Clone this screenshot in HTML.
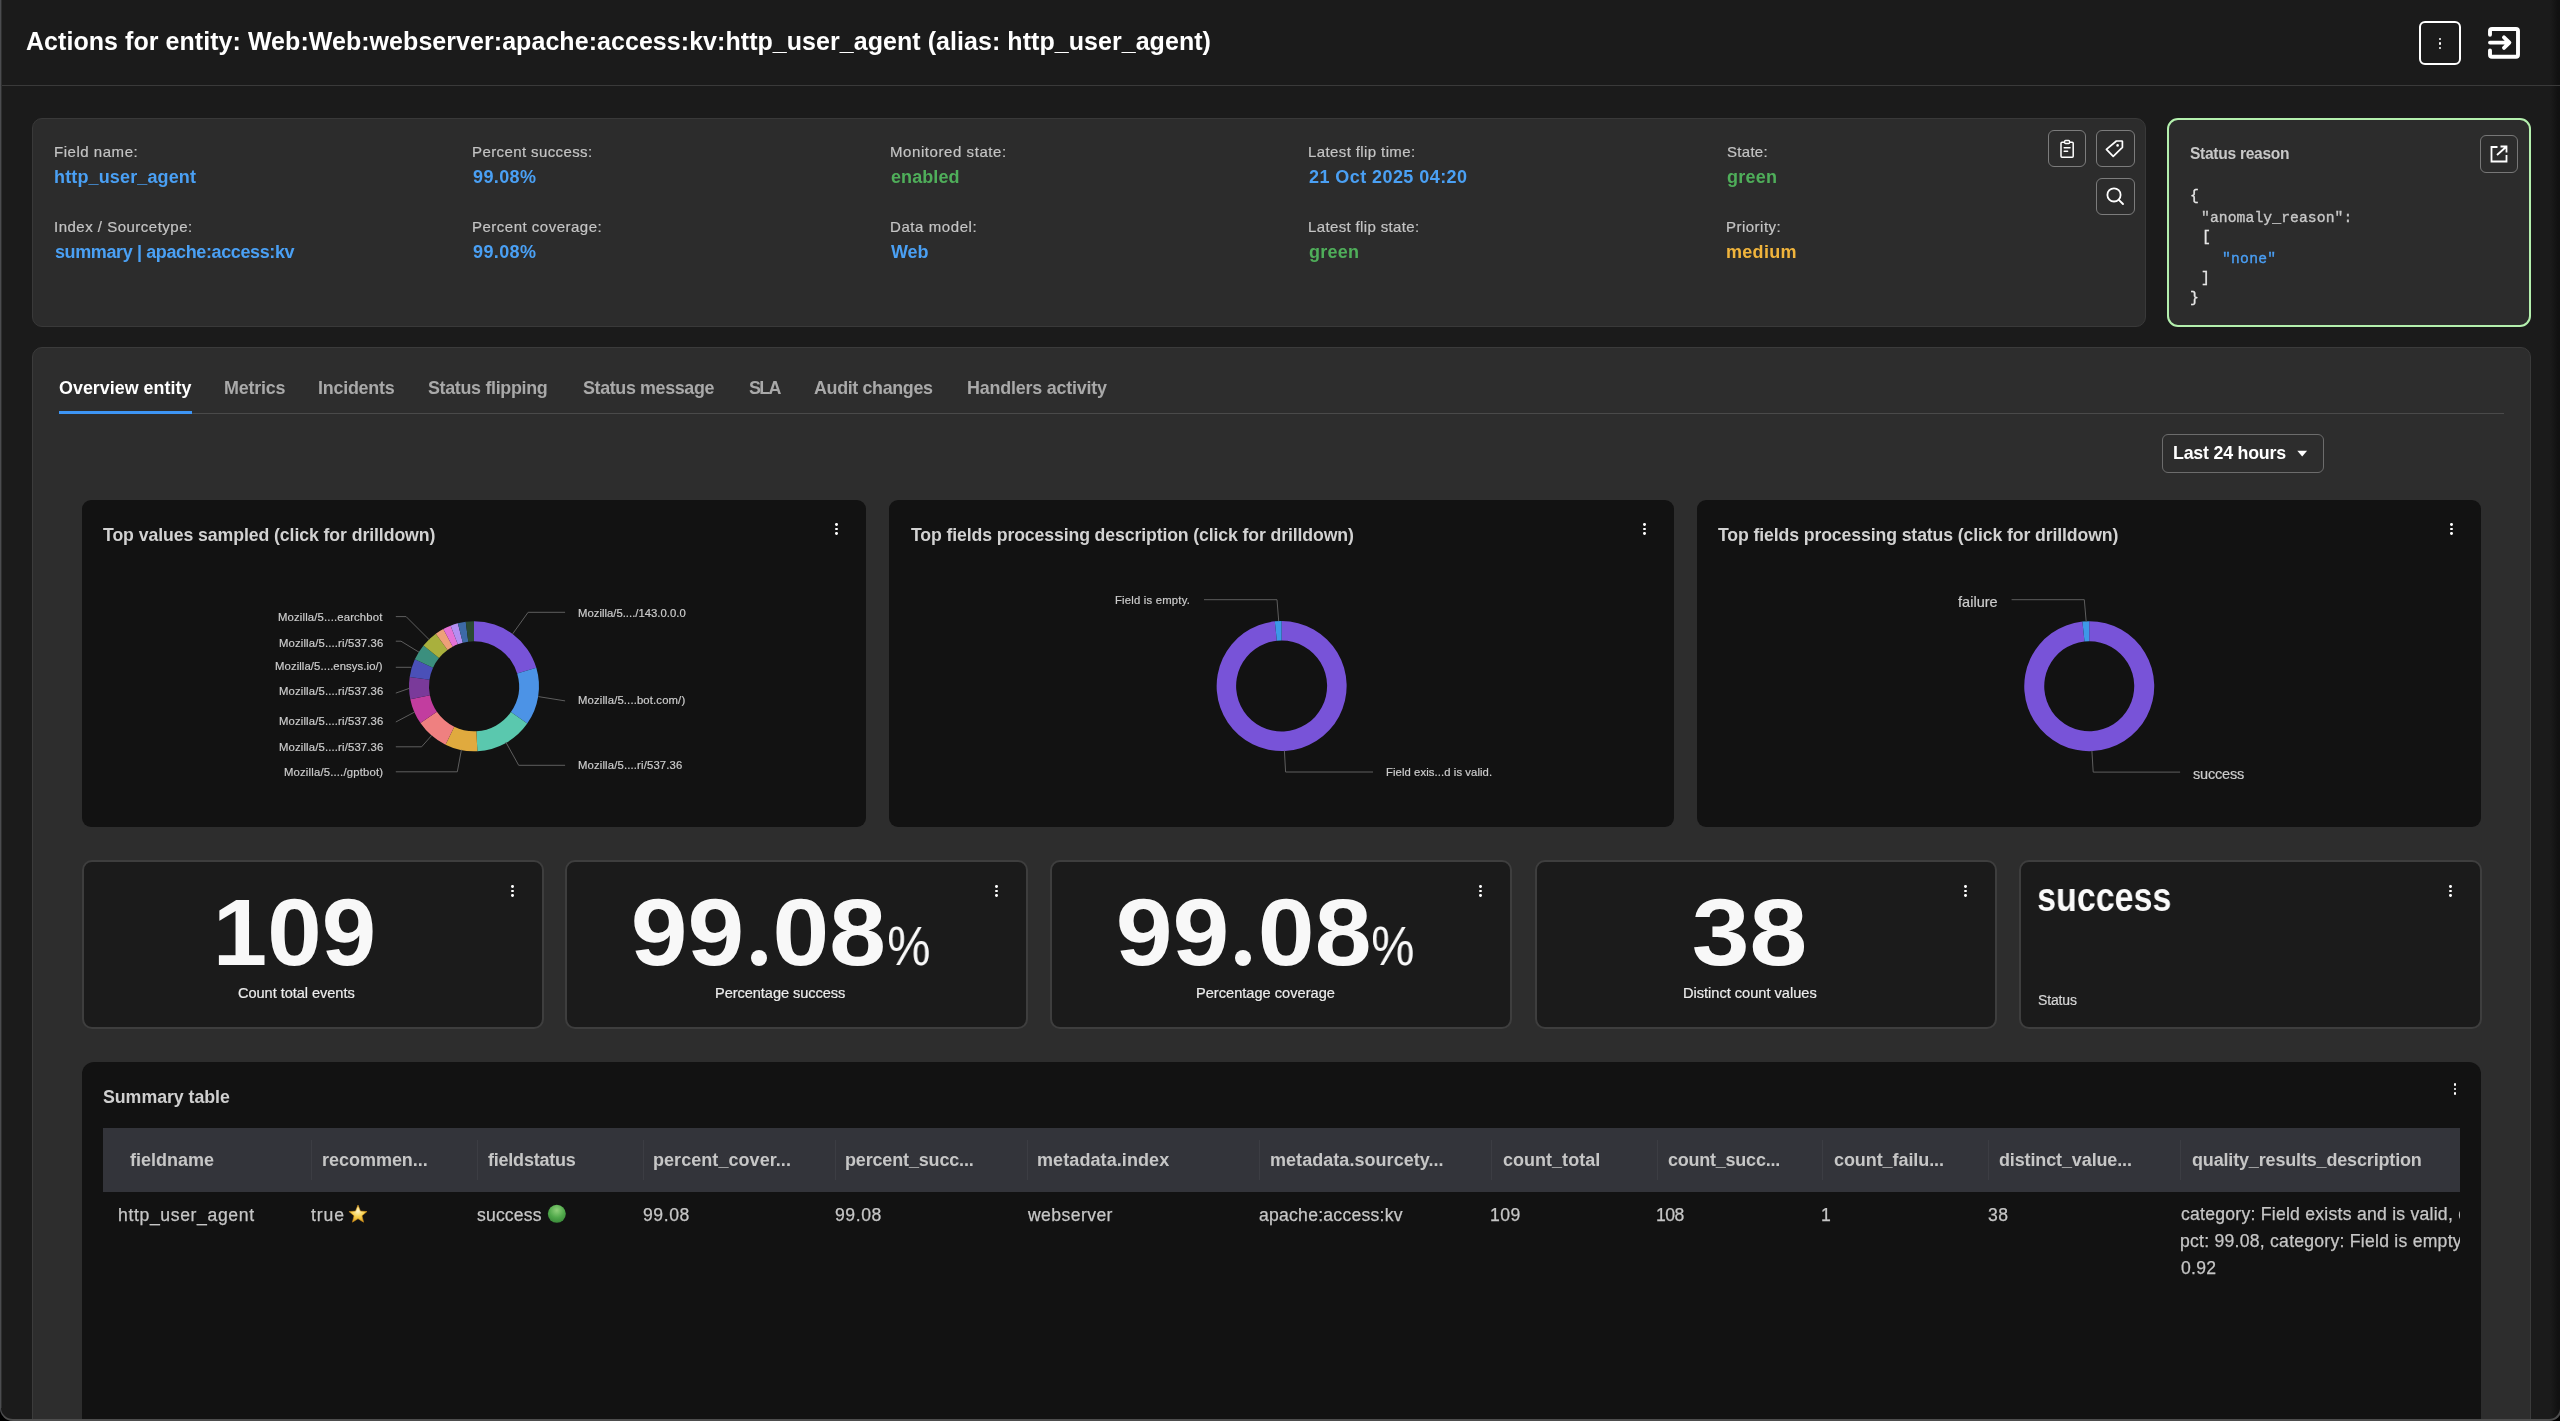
<!DOCTYPE html><html><head><meta charset="utf-8"><style>
html,body{margin:0;padding:0;background:#000;}
body{width:2560px;height:1421px;overflow:hidden;position:relative;}
.t{position:absolute;white-space:nowrap;will-change:transform;}
.r{position:absolute;}
svg{position:absolute;left:0;top:0;}
</style></head><body>
<div class="r" style="left:0;top:0;width:2560px;height:1421px;background:#1b1b1b;"></div>
<div class="r" style="left:2550px;top:0;width:10px;height:1421px;background:linear-gradient(to right,rgba(17,17,17,0),#111 80%)"></div>
<div class="r" style="left:1px;top:85px;width:2559px;height:1px;background:#3a3a3a;border-radius:0px;box-sizing:border-box;"></div>
<div class="t" style="left:26.40px;top:29px;font-family:'Liberation Sans', sans-serif;font-size:25px;line-height:25px;font-weight:700;color:#fff;letter-spacing:0.053px;">Actions for entity: Web:Web:webserver:apache:access:kv:http_user_agent (alias: http_user_agent)</div>
<div class="r" style="left:2419px;top:21px;width:42px;height:44px;background:none;border-radius:6px;box-sizing:border-box;border:2.5px solid #fff;"></div>
<div class="r" style="left:2438.80px;top:37.60px;width:2.6px;height:2.6px;border-radius:50%;background:#fff"></div>
<div class="r" style="left:2438.80px;top:42.10px;width:2.6px;height:2.6px;border-radius:50%;background:#fff"></div>
<div class="r" style="left:2438.80px;top:46.60px;width:2.6px;height:2.6px;border-radius:50%;background:#fff"></div>
<svg width="2560" height="1421" style="pointer-events:none"><path d="M2490 34.8 V31 a2 2 0 0 1 2 -2 H2516 a2 2 0 0 1 2 2 V54.8 a2 2 0 0 1 -2 2 H2492 a2 2 0 0 1 -2 -2 V50.4" fill="none" stroke="#fff" stroke-width="3.9" stroke-linecap="round" stroke-linejoin="round"/><path d="M2490 42.6 H2509 M2504 37.3 L2509.4 42.6 L2504 47.9" fill="none" stroke="#fff" stroke-width="3.9" stroke-linecap="round" stroke-linejoin="round"/></svg>
<div class="r" style="left:32px;top:118px;width:2114px;height:209px;background:#2c2c2c;border-radius:10px;box-sizing:border-box;border:1px solid #393939;"></div>
<div class="t" style="left:53.60px;top:144px;font-family:'Liberation Sans', sans-serif;font-size:15px;line-height:15px;font-weight:400;color:#c4c4c4;letter-spacing:0.530px;-webkit-text-stroke:0.2px #c4c4c4;">Field name:</div>
<div class="t" style="left:53.60px;top:168px;font-family:'Liberation Sans', sans-serif;font-size:18px;line-height:18px;font-weight:700;color:#4aa0f4;letter-spacing:0.140px;">http_user_agent</div>
<div class="t" style="left:53.60px;top:219px;font-family:'Liberation Sans', sans-serif;font-size:15px;line-height:15px;font-weight:400;color:#c4c4c4;letter-spacing:0.496px;-webkit-text-stroke:0.2px #c4c4c4;">Index / Sourcetype:</div>
<div class="t" style="left:54.60px;top:243px;font-family:'Liberation Sans', sans-serif;font-size:18px;line-height:18px;font-weight:700;color:#4aa0f4;letter-spacing:-0.387px;">summary | apache:access:kv</div>
<div class="t" style="left:471.50px;top:144px;font-family:'Liberation Sans', sans-serif;font-size:15px;line-height:15px;font-weight:400;color:#c4c4c4;letter-spacing:0.397px;-webkit-text-stroke:0.2px #c4c4c4;">Percent success:</div>
<div class="t" style="left:472.50px;top:168px;font-family:'Liberation Sans', sans-serif;font-size:18px;line-height:18px;font-weight:700;color:#4aa0f4;letter-spacing:0.391px;">99.08%</div>
<div class="t" style="left:471.50px;top:219px;font-family:'Liberation Sans', sans-serif;font-size:15px;line-height:15px;font-weight:400;color:#c4c4c4;letter-spacing:0.496px;-webkit-text-stroke:0.2px #c4c4c4;">Percent coverage:</div>
<div class="t" style="left:472.50px;top:243px;font-family:'Liberation Sans', sans-serif;font-size:18px;line-height:18px;font-weight:700;color:#4aa0f4;letter-spacing:0.391px;">99.08%</div>
<div class="t" style="left:889.50px;top:144px;font-family:'Liberation Sans', sans-serif;font-size:15px;line-height:15px;font-weight:400;color:#c4c4c4;letter-spacing:0.574px;-webkit-text-stroke:0.2px #c4c4c4;">Monitored state:</div>
<div class="t" style="left:890.50px;top:168px;font-family:'Liberation Sans', sans-serif;font-size:18px;line-height:18px;font-weight:700;color:#4fae5a;letter-spacing:0.079px;">enabled</div>
<div class="t" style="left:889.50px;top:219px;font-family:'Liberation Sans', sans-serif;font-size:15px;line-height:15px;font-weight:400;color:#c4c4c4;letter-spacing:0.579px;-webkit-text-stroke:0.2px #c4c4c4;">Data model:</div>
<div class="t" style="left:890.50px;top:243px;font-family:'Liberation Sans', sans-serif;font-size:18px;line-height:18px;font-weight:700;color:#4aa0f4;letter-spacing:-0.087px;">Web</div>
<div class="t" style="left:1307.50px;top:144px;font-family:'Liberation Sans', sans-serif;font-size:15px;line-height:15px;font-weight:400;color:#c4c4c4;letter-spacing:0.393px;-webkit-text-stroke:0.2px #c4c4c4;">Latest flip time:</div>
<div class="t" style="left:1308.50px;top:168px;font-family:'Liberation Sans', sans-serif;font-size:18px;line-height:18px;font-weight:700;color:#4aa0f4;letter-spacing:0.431px;">21 Oct 2025 04:20</div>
<div class="t" style="left:1307.50px;top:219px;font-family:'Liberation Sans', sans-serif;font-size:15px;line-height:15px;font-weight:400;color:#c4c4c4;letter-spacing:0.359px;-webkit-text-stroke:0.2px #c4c4c4;">Latest flip state:</div>
<div class="t" style="left:1308.50px;top:243px;font-family:'Liberation Sans', sans-serif;font-size:18px;line-height:18px;font-weight:700;color:#4fae5a;letter-spacing:0.245px;">green</div>
<div class="t" style="left:1726.50px;top:144px;font-family:'Liberation Sans', sans-serif;font-size:15px;line-height:15px;font-weight:400;color:#c4c4c4;letter-spacing:0.295px;-webkit-text-stroke:0.2px #c4c4c4;">State:</div>
<div class="t" style="left:1726.50px;top:168px;font-family:'Liberation Sans', sans-serif;font-size:18px;line-height:18px;font-weight:700;color:#4fae5a;letter-spacing:0.245px;">green</div>
<div class="t" style="left:1725.50px;top:219px;font-family:'Liberation Sans', sans-serif;font-size:15px;line-height:15px;font-weight:400;color:#c4c4c4;letter-spacing:0.479px;-webkit-text-stroke:0.2px #c4c4c4;">Priority:</div>
<div class="t" style="left:1725.50px;top:243px;font-family:'Liberation Sans', sans-serif;font-size:18px;line-height:18px;font-weight:700;color:#f0b43c;letter-spacing:0.299px;">medium</div>
<div class="r" style="left:2048px;top:130px;width:38px;height:37px;background:none;border-radius:6px;box-sizing:border-box;border:1px solid #7c7c7c;"></div>
<div class="r" style="left:2096px;top:130px;width:39px;height:37px;background:none;border-radius:6px;box-sizing:border-box;border:1px solid #7c7c7c;"></div>
<div class="r" style="left:2096px;top:178px;width:39px;height:37px;background:none;border-radius:6px;box-sizing:border-box;border:1px solid #7c7c7c;"></div>
<svg width="2560" height="1421"><path d="M2064.5 142.3 H2062 a1 1 0 0 0 -1 1 V156.3 a1 1 0 0 0 1 1 H2072.2 a1 1 0 0 0 1 -1 V143.3 a1 1 0 0 0 -1 -1 H2069.6" fill="none" stroke="#fff" stroke-width="1.5"/><rect x="2064.6" y="140.5" width="5" height="3" rx="1" fill="none" stroke="#fff" stroke-width="1.4"/><path d="M2064.2 147.8 H2070 M2064.2 151.3 H2067.6" stroke="#fff" stroke-width="1.5" stroke-linecap="round"/><path d="M2116.4 141.0 H2121.8 a0.6 0.6 0 0 1 0.6 0.6 V147.4 L2113.2 156.4 L2106.4 149.4 Z" fill="none" stroke="#fff" stroke-width="1.7" stroke-linejoin="round"/><circle cx="2117.6" cy="145.4" r="1.3" fill="#fff"/><circle cx="2114" cy="194.9" r="6.6" fill="none" stroke="#fff" stroke-width="1.8"/><path d="M2118.8 199.8 L2123 204" stroke="#fff" stroke-width="1.9" stroke-linecap="round"/></svg>
<div class="r" style="left:2167px;top:118px;width:364px;height:209px;background:#2c2c2c;border-radius:11px;box-sizing:border-box;border:2px solid #b4f0ae;"></div>
<div class="t" style="left:2190.40px;top:146px;font-family:'Liberation Sans', sans-serif;font-size:15.6px;line-height:15.6px;font-weight:700;color:#c8c8c8;letter-spacing:-0.300px;">Status reason</div>
<div class="r" style="left:2480px;top:135px;width:38px;height:38px;background:none;border-radius:6px;box-sizing:border-box;border:1px solid #777;"></div>
<svg width="2560" height="1421"><path d="M2497.5 147 H2491.5 V161.5 H2506.5 V155" fill="none" stroke="#fff" stroke-width="1.8"/><path d="M2497 155 L2506.5 146.5 M2500.5 146.5 H2506.5 V152.5" fill="none" stroke="#fff" stroke-width="1.8"/></svg>
<div class="t" style="left:2189.60px;top:189px;font-family:'Liberation Mono', monospace;font-size:14.7px;line-height:14.7px;font-weight:400;color:#e6e6e6;-webkit-text-stroke:0.35px #e6e6e6;">{</div>
<div class="t" style="left:2200.50px;top:211px;font-family:'Liberation Mono', monospace;font-size:14.7px;line-height:14.7px;font-weight:400;color:#c8c8c8;letter-spacing:0.092px;-webkit-text-stroke:0.35px #c8c8c8;">"anomaly_reason":</div>
<div class="t" style="left:2201.50px;top:230px;font-family:'Liberation Mono', monospace;font-size:14.7px;line-height:14.7px;font-weight:400;color:#e6e6e6;-webkit-text-stroke:0.35px #e6e6e6;">[</div>
<div class="t" style="left:2222.30px;top:252px;font-family:'Liberation Mono', monospace;font-size:14.7px;line-height:14.7px;font-weight:400;color:#4a9ff5;letter-spacing:0.246px;-webkit-text-stroke:0.35px #4a9ff5;">"none"</div>
<div class="t" style="left:2200.50px;top:271px;font-family:'Liberation Mono', monospace;font-size:14.7px;line-height:14.7px;font-weight:400;color:#e6e6e6;-webkit-text-stroke:0.35px #e6e6e6;">]</div>
<div class="t" style="left:2189.60px;top:291px;font-family:'Liberation Mono', monospace;font-size:14.7px;line-height:14.7px;font-weight:400;color:#e6e6e6;-webkit-text-stroke:0.35px #e6e6e6;">}</div>
<div class="r" style="left:32px;top:347px;width:2499px;height:1100px;background:#2d2d2d;border:1px solid #3b3b3b;border-radius:10px;box-sizing:border-box;"></div>
<div class="r" style="left:59px;top:413px;width:2445px;height:1px;background:#4a4a4a;border-radius:0px;box-sizing:border-box;"></div>
<div class="t" style="left:59.30px;top:380px;font-family:'Liberation Sans', sans-serif;font-size:17.9px;line-height:17.9px;font-weight:700;color:#fff;letter-spacing:0.007px;">Overview entity</div>
<div class="t" style="left:223.50px;top:380px;font-family:'Liberation Sans', sans-serif;font-size:17.9px;line-height:17.9px;font-weight:700;color:#a9a9a9;letter-spacing:-0.199px;">Metrics</div>
<div class="t" style="left:317.70px;top:380px;font-family:'Liberation Sans', sans-serif;font-size:17.9px;line-height:17.9px;font-weight:700;color:#a9a9a9;letter-spacing:-0.235px;">Incidents</div>
<div class="t" style="left:428.40px;top:380px;font-family:'Liberation Sans', sans-serif;font-size:17.9px;line-height:17.9px;font-weight:700;color:#a9a9a9;letter-spacing:-0.322px;">Status flipping</div>
<div class="t" style="left:582.50px;top:380px;font-family:'Liberation Sans', sans-serif;font-size:17.9px;line-height:17.9px;font-weight:700;color:#a9a9a9;letter-spacing:-0.368px;">Status message</div>
<div class="t" style="left:748.50px;top:380px;font-family:'Liberation Sans', sans-serif;font-size:17.9px;line-height:17.9px;font-weight:700;color:#a9a9a9;letter-spacing:-1.681px;">SLA</div>
<div class="t" style="left:814.00px;top:380px;font-family:'Liberation Sans', sans-serif;font-size:17.9px;line-height:17.9px;font-weight:700;color:#a9a9a9;letter-spacing:-0.359px;">Audit changes</div>
<div class="t" style="left:966.50px;top:380px;font-family:'Liberation Sans', sans-serif;font-size:17.9px;line-height:17.9px;font-weight:700;color:#a9a9a9;letter-spacing:-0.202px;">Handlers activity</div>
<div class="r" style="left:59px;top:411px;width:133px;height:3px;background:#3d95f5;border-radius:0px;box-sizing:border-box;"></div>
<div class="r" style="left:2162px;top:434px;width:162px;height:39px;background:none;border-radius:6px;box-sizing:border-box;border:1px solid #6c6c6c;"></div>
<div class="t" style="left:2172.60px;top:445px;font-family:'Liberation Sans', sans-serif;font-size:17.8px;line-height:17.8px;font-weight:700;color:#fff;letter-spacing:-0.210px;">Last 24 hours</div>
<svg width="2560" height="1421"><path d="M2297.3 450.8 H2307.1 L2302.2 456.4 Z" fill="#fff"/></svg>
<div class="r" style="left:82px;top:500px;width:784px;height:327px;background:#121212;border-radius:9px;box-sizing:border-box;"></div>
<div class="t" style="left:103.00px;top:527px;font-family:'Liberation Sans', sans-serif;font-size:17.7px;line-height:17.7px;font-weight:700;color:#d2d2d2;letter-spacing:-0.087px;">Top values sampled (click for drilldown)</div>
<div class="r" style="left:835.40px;top:523.20px;width:2.8px;height:2.8px;border-radius:50%;background:#fff"></div>
<div class="r" style="left:835.40px;top:527.70px;width:2.8px;height:2.8px;border-radius:50%;background:#fff"></div>
<div class="r" style="left:835.40px;top:532.20px;width:2.8px;height:2.8px;border-radius:50%;background:#fff"></div>
<div class="r" style="left:889px;top:500px;width:785px;height:327px;background:#121212;border-radius:9px;box-sizing:border-box;"></div>
<div class="t" style="left:910.50px;top:527px;font-family:'Liberation Sans', sans-serif;font-size:17.7px;line-height:17.7px;font-weight:700;color:#d2d2d2;letter-spacing:-0.127px;">Top fields processing description (click for drilldown)</div>
<div class="r" style="left:1643.40px;top:523.20px;width:2.8px;height:2.8px;border-radius:50%;background:#fff"></div>
<div class="r" style="left:1643.40px;top:527.70px;width:2.8px;height:2.8px;border-radius:50%;background:#fff"></div>
<div class="r" style="left:1643.40px;top:532.20px;width:2.8px;height:2.8px;border-radius:50%;background:#fff"></div>
<div class="r" style="left:1697px;top:500px;width:784px;height:327px;background:#121212;border-radius:9px;box-sizing:border-box;"></div>
<div class="t" style="left:1718.00px;top:527px;font-family:'Liberation Sans', sans-serif;font-size:17.7px;line-height:17.7px;font-weight:700;color:#d2d2d2;letter-spacing:-0.125px;">Top fields processing status (click for drilldown)</div>
<div class="r" style="left:2450.40px;top:523.20px;width:2.8px;height:2.8px;border-radius:50%;background:#fff"></div>
<div class="r" style="left:2450.40px;top:527.70px;width:2.8px;height:2.8px;border-radius:50%;background:#fff"></div>
<div class="r" style="left:2450.40px;top:532.20px;width:2.8px;height:2.8px;border-radius:50%;background:#fff"></div>
<svg width="2560" height="1421"><path d="M474.00 621.30 A65 65 0 0 1 536.32 667.84 L517.15 673.52 A45 45 0 0 0 474.00 641.30 Z" fill="#7853d8"/><path d="M536.32 667.84 A65 65 0 0 1 527.24 723.58 L510.86 712.11 A45 45 0 0 0 517.15 673.52 Z" fill="#4c93e6"/><path d="M527.24 723.58 A65 65 0 0 1 477.40 751.21 L476.36 731.24 A45 45 0 0 0 510.86 712.11 Z" fill="#5ac8ae"/><path d="M477.40 751.21 A65 65 0 0 1 445.51 744.72 L454.27 726.75 A45 45 0 0 0 476.36 731.24 Z" fill="#e0aa3e"/><path d="M445.51 744.72 A65 65 0 0 1 420.43 723.12 L436.91 711.79 A45 45 0 0 0 454.27 726.75 Z" fill="#ef8080"/><path d="M420.43 723.12 A65 65 0 0 1 410.30 699.26 L429.90 695.27 A45 45 0 0 0 436.91 711.79 Z" fill="#c23d9f"/><path d="M410.30 699.26 A65 65 0 0 1 409.68 676.92 L429.47 679.80 A45 45 0 0 0 429.90 695.27 Z" fill="#7a3a9a"/><path d="M409.68 676.92 A65 65 0 0 1 414.85 659.34 L433.05 667.64 A45 45 0 0 0 429.47 679.80 Z" fill="#4a50b8"/><path d="M414.85 659.34 A65 65 0 0 1 423.49 645.39 L439.03 657.98 A45 45 0 0 0 433.05 667.64 Z" fill="#3b8f7e"/><path d="M423.49 645.39 A65 65 0 0 1 435.79 633.71 L447.55 649.89 A45 45 0 0 0 439.03 657.98 Z" fill="#a9b03d"/><path d="M435.79 633.71 A65 65 0 0 1 443.28 629.02 L452.74 646.64 A45 45 0 0 0 447.55 649.89 Z" fill="#eda078"/><path d="M443.28 629.02 A65 65 0 0 1 450.60 625.66 L457.80 644.32 A45 45 0 0 0 452.74 646.64 Z" fill="#e572d6"/><path d="M450.60 625.66 A65 65 0 0 1 457.84 623.34 L462.81 642.71 A45 45 0 0 0 457.80 644.32 Z" fill="#b48ff2"/><path d="M457.84 623.34 A65 65 0 0 1 465.74 621.83 L468.28 641.66 A45 45 0 0 0 462.81 642.71 Z" fill="#3d6aa6"/><path d="M465.74 621.83 A65 65 0 0 1 474.00 621.30 L474.00 641.30 A45 45 0 0 0 468.28 641.66 Z" fill="#2b4a33"/><polyline points="395.8,616.6 406.1,616.6 429.3,639.8" fill="none" stroke="#5e5e5e" stroke-width="1"/><polyline points="395.8,641.2 401.0,641.2 419.0,652.2" fill="none" stroke="#5e5e5e" stroke-width="1"/><polyline points="395.8,667.3 411.3,667.3" fill="none" stroke="#5e5e5e" stroke-width="1"/><polyline points="395.8,693.1 409.5,688.3" fill="none" stroke="#5e5e5e" stroke-width="1"/><polyline points="395.8,722.0 414.7,712.0" fill="none" stroke="#5e5e5e" stroke-width="1"/><polyline points="395.8,746.8 421.6,746.8 431.9,735.2" fill="none" stroke="#5e5e5e" stroke-width="1"/><polyline points="395.8,771.8 457.3,771.8 461.4,749.8" fill="none" stroke="#5e5e5e" stroke-width="1"/><polyline points="512.7,633.8 528.1,612.3 565.1,612.3" fill="none" stroke="#5e5e5e" stroke-width="1"/><polyline points="538.4,696.6 565.1,700.9" fill="none" stroke="#5e5e5e" stroke-width="1"/><polyline points="505.8,742.1 518.7,765.3 565.1,765.3" fill="none" stroke="#5e5e5e" stroke-width="1"/><path d="M1281.60 621.00 A65 65 0 1 1 1274.81 621.36 L1276.84 640.75 A45.5 45.5 0 1 0 1281.60 640.50 Z" fill="#7853d8"/><path d="M1274.81 621.36 A65 65 0 0 1 1281.60 621.00 L1281.60 640.50 A45.5 45.5 0 0 0 1276.84 640.75 Z" fill="#3d98e8"/><polyline points="1204.0,599.7 1277.0,599.7 1278.7,621.0" fill="none" stroke="#5e5e5e" stroke-width="1"/><polyline points="1284.4,750.6 1285.6,772.0 1373.0,772.0" fill="none" stroke="#5e5e5e" stroke-width="1"/><path d="M2089.20 621.20 A65 65 0 1 1 2082.41 621.56 L2084.50 641.45 A45 45 0 1 0 2089.20 641.20 Z" fill="#7853d8"/><path d="M2082.41 621.56 A65 65 0 0 1 2089.20 621.20 L2089.20 641.20 A45 45 0 0 0 2084.50 641.45 Z" fill="#3d98e8"/><polyline points="2011.6,599.7 2084.3,599.7 2086.2,621.7" fill="none" stroke="#5e5e5e" stroke-width="1"/><polyline points="2091.9,750.7 2093.2,772.1 2180.1,772.1" fill="none" stroke="#5e5e5e" stroke-width="1"/></svg>
<div class="t" style="left:277.70px;top:612px;font-family:'Liberation Sans', sans-serif;font-size:11.3px;line-height:11.3px;font-weight:400;color:#cccccc;letter-spacing:0.162px;-webkit-text-stroke:0.2px #cccccc;">Mozilla/5....earchbot</div>
<div class="t" style="left:278.90px;top:638px;font-family:'Liberation Sans', sans-serif;font-size:11.3px;line-height:11.3px;font-weight:400;color:#cccccc;letter-spacing:0.152px;-webkit-text-stroke:0.2px #cccccc;">Mozilla/5....ri/537.36</div>
<div class="t" style="left:275.10px;top:661px;font-family:'Liberation Sans', sans-serif;font-size:11.3px;line-height:11.3px;font-weight:400;color:#cccccc;letter-spacing:0.095px;-webkit-text-stroke:0.2px #cccccc;">Mozilla/5....ensys.io/)</div>
<div class="t" style="left:278.90px;top:686px;font-family:'Liberation Sans', sans-serif;font-size:11.3px;line-height:11.3px;font-weight:400;color:#cccccc;letter-spacing:0.152px;-webkit-text-stroke:0.2px #cccccc;">Mozilla/5....ri/537.36</div>
<div class="t" style="left:278.90px;top:716px;font-family:'Liberation Sans', sans-serif;font-size:11.3px;line-height:11.3px;font-weight:400;color:#cccccc;letter-spacing:0.152px;-webkit-text-stroke:0.2px #cccccc;">Mozilla/5....ri/537.36</div>
<div class="t" style="left:278.90px;top:742px;font-family:'Liberation Sans', sans-serif;font-size:11.3px;line-height:11.3px;font-weight:400;color:#cccccc;letter-spacing:0.152px;-webkit-text-stroke:0.2px #cccccc;">Mozilla/5....ri/537.36</div>
<div class="t" style="left:283.70px;top:767px;font-family:'Liberation Sans', sans-serif;font-size:11.3px;line-height:11.3px;font-weight:400;color:#cccccc;letter-spacing:0.176px;-webkit-text-stroke:0.2px #cccccc;">Mozilla/5..../gptbot)</div>
<div class="t" style="left:578.00px;top:608px;font-family:'Liberation Sans', sans-serif;font-size:11.3px;line-height:11.3px;font-weight:400;color:#cccccc;letter-spacing:0.014px;-webkit-text-stroke:0.2px #cccccc;">Mozilla/5..../143.0.0.0</div>
<div class="t" style="left:578.00px;top:695px;font-family:'Liberation Sans', sans-serif;font-size:11.3px;line-height:11.3px;font-weight:400;color:#cccccc;letter-spacing:0.140px;-webkit-text-stroke:0.2px #cccccc;">Mozilla/5....bot.com/)</div>
<div class="t" style="left:578.00px;top:760px;font-family:'Liberation Sans', sans-serif;font-size:11.3px;line-height:11.3px;font-weight:400;color:#cccccc;letter-spacing:0.152px;-webkit-text-stroke:0.2px #cccccc;">Mozilla/5....ri/537.36</div>
<div class="t" style="left:1114.60px;top:595px;font-family:'Liberation Sans', sans-serif;font-size:11.3px;line-height:11.3px;font-weight:400;color:#cccccc;letter-spacing:0.204px;-webkit-text-stroke:0.2px #cccccc;">Field is empty.</div>
<div class="t" style="left:1386.00px;top:767px;font-family:'Liberation Sans', sans-serif;font-size:11.3px;line-height:11.3px;font-weight:400;color:#cccccc;letter-spacing:0.083px;-webkit-text-stroke:0.2px #cccccc;">Field exis...d is valid.</div>
<div class="t" style="left:1958.00px;top:595px;font-family:'Liberation Sans', sans-serif;font-size:14.5px;line-height:14.5px;font-weight:400;color:#cccccc;letter-spacing:0.029px;-webkit-text-stroke:0.2px #cccccc;">failure</div>
<div class="t" style="left:2193.40px;top:767px;font-family:'Liberation Sans', sans-serif;font-size:14.5px;line-height:14.5px;font-weight:400;color:#cccccc;letter-spacing:-0.188px;-webkit-text-stroke:0.2px #cccccc;">success</div>
<div class="r" style="left:82px;top:860px;width:462px;height:169px;background:#1b1b1b;border-radius:10px;box-sizing:border-box;border:2px solid #3e3e3e;"></div>
<div class="r" style="left:511.10px;top:885.10px;width:2.8px;height:2.8px;border-radius:50%;background:#fff"></div>
<div class="r" style="left:511.10px;top:889.60px;width:2.8px;height:2.8px;border-radius:50%;background:#fff"></div>
<div class="r" style="left:511.10px;top:894.10px;width:2.8px;height:2.8px;border-radius:50%;background:#fff"></div>
<div class="r" style="left:565px;top:860px;width:463px;height:169px;background:#1b1b1b;border-radius:10px;box-sizing:border-box;border:2px solid #3e3e3e;"></div>
<div class="r" style="left:995.10px;top:885.10px;width:2.8px;height:2.8px;border-radius:50%;background:#fff"></div>
<div class="r" style="left:995.10px;top:889.60px;width:2.8px;height:2.8px;border-radius:50%;background:#fff"></div>
<div class="r" style="left:995.10px;top:894.10px;width:2.8px;height:2.8px;border-radius:50%;background:#fff"></div>
<div class="r" style="left:1050px;top:860px;width:462px;height:169px;background:#1b1b1b;border-radius:10px;box-sizing:border-box;border:2px solid #3e3e3e;"></div>
<div class="r" style="left:1479.10px;top:885.10px;width:2.8px;height:2.8px;border-radius:50%;background:#fff"></div>
<div class="r" style="left:1479.10px;top:889.60px;width:2.8px;height:2.8px;border-radius:50%;background:#fff"></div>
<div class="r" style="left:1479.10px;top:894.10px;width:2.8px;height:2.8px;border-radius:50%;background:#fff"></div>
<div class="r" style="left:1535px;top:860px;width:462px;height:169px;background:#1b1b1b;border-radius:10px;box-sizing:border-box;border:2px solid #3e3e3e;"></div>
<div class="r" style="left:1964.10px;top:885.10px;width:2.8px;height:2.8px;border-radius:50%;background:#fff"></div>
<div class="r" style="left:1964.10px;top:889.60px;width:2.8px;height:2.8px;border-radius:50%;background:#fff"></div>
<div class="r" style="left:1964.10px;top:894.10px;width:2.8px;height:2.8px;border-radius:50%;background:#fff"></div>
<div class="r" style="left:2019px;top:860px;width:463px;height:169px;background:#1b1b1b;border-radius:10px;box-sizing:border-box;border:2px solid #3e3e3e;"></div>
<div class="r" style="left:2449.10px;top:885.10px;width:2.8px;height:2.8px;border-radius:50%;background:#fff"></div>
<div class="r" style="left:2449.10px;top:889.60px;width:2.8px;height:2.8px;border-radius:50%;background:#fff"></div>
<div class="r" style="left:2449.10px;top:894.10px;width:2.8px;height:2.8px;border-radius:50%;background:#fff"></div>
<div class="t" style="left:213.00px;top:886px;font-family:'Liberation Sans', sans-serif;font-size:94px;line-height:94px;font-weight:700;color:#f8f8f8;transform:scaleX(1.0414);transform-origin:5.00px 0;">109</div>
<div class="t" style="left:238.00px;top:986px;font-family:'Liberation Sans', sans-serif;font-size:14.6px;line-height:14.6px;font-weight:400;color:#ececec;letter-spacing:-0.055px;-webkit-text-stroke:0.2px #ececec;">Count total events</div>
<div class="t" style="left:631.40px;top:886px;font-family:'Liberation Sans', sans-serif;font-size:94px;line-height:94px;font-weight:700;color:#f8f8f8;transform:scaleX(1.0854);transform-origin:3.00px 0;">99.08</div>
<div class="t" style="left:886.75px;top:918px;font-family:'Liberation Sans', sans-serif;font-size:56px;line-height:56px;font-weight:400;color:#f8f8f8;transform:scaleX(0.8663);transform-origin:2.00px 0;">%</div>
<div class="t" style="left:715.00px;top:986px;font-family:'Liberation Sans', sans-serif;font-size:14.6px;line-height:14.6px;font-weight:400;color:#ececec;letter-spacing:-0.066px;-webkit-text-stroke:0.2px #ececec;">Percentage success</div>
<div class="t" style="left:1115.75px;top:886px;font-family:'Liberation Sans', sans-serif;font-size:94px;line-height:94px;font-weight:700;color:#f8f8f8;transform:scaleX(1.0872);transform-origin:3.00px 0;">99.08</div>
<div class="t" style="left:1371.00px;top:918px;font-family:'Liberation Sans', sans-serif;font-size:56px;line-height:56px;font-weight:400;color:#f8f8f8;transform:scaleX(0.8652);transform-origin:2.00px 0;">%</div>
<div class="t" style="left:1195.60px;top:986px;font-family:'Liberation Sans', sans-serif;font-size:14.6px;line-height:14.6px;font-weight:400;color:#ececec;letter-spacing:0.010px;-webkit-text-stroke:0.2px #ececec;">Percentage coverage</div>
<div class="t" style="left:1691.75px;top:886px;font-family:'Liberation Sans', sans-serif;font-size:94px;line-height:94px;font-weight:700;color:#f8f8f8;transform:scaleX(1.1044);transform-origin:2.00px 0;">38</div>
<div class="t" style="left:1682.80px;top:986px;font-family:'Liberation Sans', sans-serif;font-size:14.6px;line-height:14.6px;font-weight:400;color:#ececec;letter-spacing:-0.007px;-webkit-text-stroke:0.2px #ececec;">Distinct count values</div>
<div class="t" style="left:2036.50px;top:877px;font-family:'Liberation Sans', sans-serif;font-size:40px;line-height:40px;font-weight:700;color:#fafafa;transform:scaleX(0.8493);transform-origin:1.00px 0;">success</div>
<div class="t" style="left:2037.50px;top:993px;font-family:'Liberation Sans', sans-serif;font-size:14px;line-height:14px;font-weight:400;color:#d6d6d6;letter-spacing:-0.138px;-webkit-text-stroke:0.2px #d6d6d6;">Status</div>
<div class="r" style="left:749.8px;top:949px;width:19px;height:18px;background:#1b1b1b;will-change:transform"></div>
<div class="r" style="left:751.1px;top:949.7px;width:16.4px;height:16.4px;border-radius:50%;background:#f8f8f8;will-change:transform"></div>
<div class="r" style="left:1233.9px;top:949px;width:19px;height:18px;background:#1b1b1b;will-change:transform"></div>
<div class="r" style="left:1235.2px;top:949.7px;width:16.4px;height:16.4px;border-radius:50%;background:#f8f8f8;will-change:transform"></div>
<div class="r" style="left:82px;top:1062px;width:2399px;height:500px;background:#121212;border-radius:12px;"></div>
<div class="t" style="left:103.00px;top:1089px;font-family:'Liberation Sans', sans-serif;font-size:17.8px;line-height:17.8px;font-weight:700;color:#cfcfcf;letter-spacing:-0.049px;">Summary table</div>
<div class="r" style="left:2453.60px;top:1083.10px;width:2.8px;height:2.8px;border-radius:50%;background:#fff"></div>
<div class="r" style="left:2453.60px;top:1087.60px;width:2.8px;height:2.8px;border-radius:50%;background:#fff"></div>
<div class="r" style="left:2453.60px;top:1092.10px;width:2.8px;height:2.8px;border-radius:50%;background:#fff"></div>
<div class="r" style="left:103px;top:1128px;width:2357px;height:64px;background:#33343a;border-radius:0px;box-sizing:border-box;"></div>
<div class="t" style="left:129.70px;top:1151px;font-family:'Liberation Sans', sans-serif;font-size:18px;line-height:18px;font-weight:700;color:#c6c6c6;letter-spacing:-0.014px;">fieldname</div>
<div class="t" style="left:321.60px;top:1151px;font-family:'Liberation Sans', sans-serif;font-size:18px;line-height:18px;font-weight:700;color:#c6c6c6;letter-spacing:-0.024px;">recommen...</div>
<div class="t" style="left:488.30px;top:1151px;font-family:'Liberation Sans', sans-serif;font-size:18px;line-height:18px;font-weight:700;color:#c6c6c6;letter-spacing:-0.221px;">fieldstatus</div>
<div class="t" style="left:652.80px;top:1151px;font-family:'Liberation Sans', sans-serif;font-size:18px;line-height:18px;font-weight:700;color:#c6c6c6;letter-spacing:0.055px;">percent_cover...</div>
<div class="t" style="left:845.40px;top:1151px;font-family:'Liberation Sans', sans-serif;font-size:18px;line-height:18px;font-weight:700;color:#c6c6c6;letter-spacing:-0.162px;">percent_succ...</div>
<div class="t" style="left:1037.40px;top:1151px;font-family:'Liberation Sans', sans-serif;font-size:18px;line-height:18px;font-weight:700;color:#c6c6c6;letter-spacing:0.090px;">metadata.index</div>
<div class="t" style="left:1269.50px;top:1151px;font-family:'Liberation Sans', sans-serif;font-size:18px;line-height:18px;font-weight:700;color:#c6c6c6;letter-spacing:0.046px;">metadata.sourcety...</div>
<div class="t" style="left:1503.00px;top:1151px;font-family:'Liberation Sans', sans-serif;font-size:18px;line-height:18px;font-weight:700;color:#c6c6c6;letter-spacing:0.020px;">count_total</div>
<div class="t" style="left:1668.10px;top:1151px;font-family:'Liberation Sans', sans-serif;font-size:18px;line-height:18px;font-weight:700;color:#c6c6c6;letter-spacing:-0.236px;">count_succ...</div>
<div class="t" style="left:1833.70px;top:1151px;font-family:'Liberation Sans', sans-serif;font-size:18px;line-height:18px;font-weight:700;color:#c6c6c6;letter-spacing:-0.077px;">count_failu...</div>
<div class="t" style="left:1999.00px;top:1151px;font-family:'Liberation Sans', sans-serif;font-size:18px;line-height:18px;font-weight:700;color:#c6c6c6;letter-spacing:-0.128px;">distinct_value...</div>
<div class="t" style="left:2191.60px;top:1151px;font-family:'Liberation Sans', sans-serif;font-size:18px;line-height:18px;font-weight:700;color:#c6c6c6;letter-spacing:-0.164px;">quality_results_description</div>
<div class="r" style="left:311px;top:1140px;width:1px;height:40px;background:#3c3d43;border-radius:0px;box-sizing:border-box;"></div>
<div class="r" style="left:477px;top:1140px;width:1px;height:40px;background:#3c3d43;border-radius:0px;box-sizing:border-box;"></div>
<div class="r" style="left:642.5px;top:1140px;width:1.0px;height:40px;background:#3c3d43;border-radius:0px;box-sizing:border-box;"></div>
<div class="r" style="left:834.6px;top:1140px;width:1.0px;height:40px;background:#3c3d43;border-radius:0px;box-sizing:border-box;"></div>
<div class="r" style="left:1026.5px;top:1140px;width:1.0px;height:40px;background:#3c3d43;border-radius:0px;box-sizing:border-box;"></div>
<div class="r" style="left:1258.6px;top:1140px;width:1.0px;height:40px;background:#3c3d43;border-radius:0px;box-sizing:border-box;"></div>
<div class="r" style="left:1491px;top:1140px;width:1px;height:40px;background:#3c3d43;border-radius:0px;box-sizing:border-box;"></div>
<div class="r" style="left:1657px;top:1140px;width:1px;height:40px;background:#3c3d43;border-radius:0px;box-sizing:border-box;"></div>
<div class="r" style="left:1822.4px;top:1140px;width:1.0px;height:40px;background:#3c3d43;border-radius:0px;box-sizing:border-box;"></div>
<div class="r" style="left:1987.5px;top:1140px;width:1.0px;height:40px;background:#3c3d43;border-radius:0px;box-sizing:border-box;"></div>
<div class="r" style="left:2180px;top:1140px;width:1px;height:40px;background:#3c3d43;border-radius:0px;box-sizing:border-box;"></div>
<div class="t" style="left:118.40px;top:1207px;font-family:'Liberation Sans', sans-serif;font-size:17.6px;line-height:17.6px;font-weight:400;color:#c6c6c6;letter-spacing:0.637px;-webkit-text-stroke:0.25px #c6c6c6;">http_user_agent</div>
<div class="t" style="left:310.80px;top:1207px;font-family:'Liberation Sans', sans-serif;font-size:17.6px;line-height:17.6px;font-weight:400;color:#c6c6c6;letter-spacing:0.889px;-webkit-text-stroke:0.25px #c6c6c6;">true</div>
<div class="t" style="left:476.50px;top:1207px;font-family:'Liberation Sans', sans-serif;font-size:17.6px;line-height:17.6px;font-weight:400;color:#c6c6c6;letter-spacing:0.157px;-webkit-text-stroke:0.25px #c6c6c6;">success</div>
<div class="t" style="left:642.90px;top:1207px;font-family:'Liberation Sans', sans-serif;font-size:17.6px;line-height:17.6px;font-weight:400;color:#c6c6c6;letter-spacing:0.589px;-webkit-text-stroke:0.25px #c6c6c6;">99.08</div>
<div class="t" style="left:834.90px;top:1207px;font-family:'Liberation Sans', sans-serif;font-size:17.6px;line-height:17.6px;font-weight:400;color:#c6c6c6;letter-spacing:0.589px;-webkit-text-stroke:0.25px #c6c6c6;">99.08</div>
<div class="t" style="left:1027.90px;top:1207px;font-family:'Liberation Sans', sans-serif;font-size:17.6px;line-height:17.6px;font-weight:400;color:#c6c6c6;letter-spacing:0.413px;-webkit-text-stroke:0.25px #c6c6c6;">webserver</div>
<div class="t" style="left:1259.30px;top:1207px;font-family:'Liberation Sans', sans-serif;font-size:17.6px;line-height:17.6px;font-weight:400;color:#c6c6c6;letter-spacing:0.243px;-webkit-text-stroke:0.25px #c6c6c6;">apache:access:kv</div>
<div class="t" style="left:1490.00px;top:1207px;font-family:'Liberation Sans', sans-serif;font-size:17.6px;line-height:17.6px;font-weight:400;color:#c6c6c6;letter-spacing:0.415px;-webkit-text-stroke:0.25px #c6c6c6;">109</div>
<div class="t" style="left:1656.00px;top:1207px;font-family:'Liberation Sans', sans-serif;font-size:17.6px;line-height:17.6px;font-weight:400;color:#c6c6c6;letter-spacing:-0.535px;-webkit-text-stroke:0.25px #c6c6c6;">108</div>
<div class="t" style="left:1821.40px;top:1207px;font-family:'Liberation Sans', sans-serif;font-size:17.6px;line-height:17.6px;font-weight:400;color:#c6c6c6;-webkit-text-stroke:0.25px #c6c6c6;">1</div>
<div class="t" style="left:1988.00px;top:1207px;font-family:'Liberation Sans', sans-serif;font-size:17.6px;line-height:17.6px;font-weight:400;color:#c6c6c6;letter-spacing:0.515px;-webkit-text-stroke:0.25px #c6c6c6;">38</div>
<svg width="2560" height="1421"><defs><radialGradient id="sg" cx="0.5" cy="0.35" r="0.7"><stop offset="0" stop-color="#fff6c8"/><stop offset="0.5" stop-color="#f7cf4a"/><stop offset="1" stop-color="#d99a20"/></radialGradient><radialGradient id="gg" cx="0.5" cy="0.3" r="0.7"><stop offset="0" stop-color="#8fd07a"/><stop offset="0.6" stop-color="#4fa84a"/><stop offset="1" stop-color="#3b8a3a"/></radialGradient></defs><path d="M358.00 1205.00 L360.47 1211.10 L367.04 1211.56 L361.99 1215.80 L363.58 1222.19 L358.00 1218.70 L352.42 1222.19 L354.01 1215.80 L348.96 1211.56 L355.53 1211.10 Z" fill="url(#sg)" stroke="#c88a1a" stroke-width="0.6"/><circle cx="556.8" cy="1213.8" r="9" fill="url(#gg)"/></svg>
<div class="r" style="left:2180px;top:1195px;width:280px;height:120px;overflow:hidden">
<div class="t" style="left:0.50px;top:11px;font-family:'Liberation Sans', sans-serif;font-size:17.6px;line-height:17.6px;font-weight:400;color:#c6c6c6;letter-spacing:0.250px;-webkit-text-stroke:0.25px #c6c6c6;">category: Field exists and is valid, count: 108,</div>
<div class="t" style="left:-0.50px;top:38px;font-family:'Liberation Sans', sans-serif;font-size:17.6px;line-height:17.6px;font-weight:400;color:#c6c6c6;letter-spacing:0.250px;-webkit-text-stroke:0.25px #c6c6c6;">pct: 99.08, category: Field is empty, count: 1, pct:</div>
<div class="t" style="left:0.50px;top:65px;font-family:'Liberation Sans', sans-serif;font-size:17.6px;line-height:17.6px;font-weight:400;color:#c6c6c6;letter-spacing:0.250px;-webkit-text-stroke:0.25px #c6c6c6;">0.92</div>
</div>
<div class="r" style="left:1px;top:0;width:1px;height:1408px;background:#2e2f2f"></div>
<div class="r" style="left:0;top:-20px;width:2562px;height:1441px;border:2px solid #4d4d4d;border-left:1px solid #4b4c4f;border-top:none;border-radius:0 0 13px 13px;box-sizing:border-box;box-shadow:0 0 0 300px #000;"></div>
</body></html>
